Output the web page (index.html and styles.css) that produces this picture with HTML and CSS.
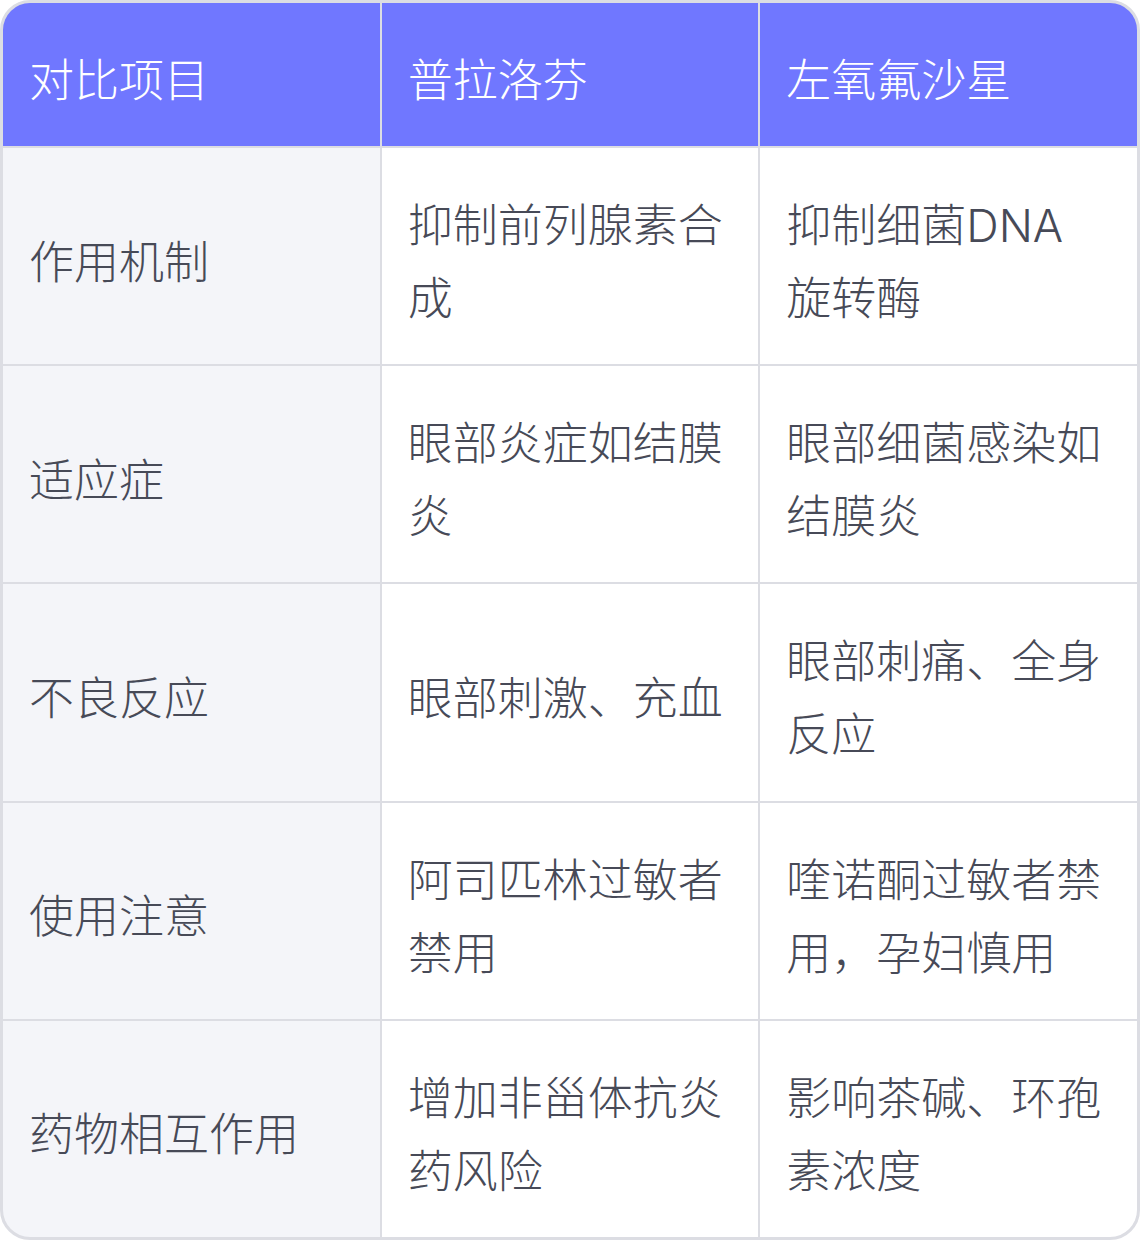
FILE: index.html
```html
<!DOCTYPE html>
<html lang="zh-CN">
<head>
<meta charset="utf-8">
<link rel="stylesheet" href="styles.css">
</head>
<body>
<div class="table">
  <div class="cell head">对比项目</div>
  <div class="cell head">普拉洛芬</div>
  <div class="cell head">左氧氟沙星</div>

  <div class="cell first">作用机制</div>
  <div class="cell">抑制前列腺素合成</div>
  <div class="cell">抑制细菌DNA旋转酶</div>

  <div class="cell first">适应症</div>
  <div class="cell">眼部炎症如结膜炎</div>
  <div class="cell">眼部细菌感染如结膜炎</div>

  <div class="cell first">不良反应</div>
  <div class="cell">眼部刺激、充血</div>
  <div class="cell">眼部刺痛、全身反应</div>

  <div class="cell first">使用注意</div>
  <div class="cell">阿司匹林过敏者禁用</div>
  <div class="cell">喹诺酮过敏者禁用，孕妇慎用</div>

  <div class="cell first">药物相互作用</div>
  <div class="cell">增加非甾体抗炎药风险</div>
  <div class="cell">影响茶碱、环孢素浓度</div>
</div>
</body>
</html>
```
FILE: styles.css
```css
html, body {
  margin: 0;
  padding: 0;
  background: #ffffff;
}
body {
  font-family: "Inter", "Noto Sans CJK SC", "Noto Sans", sans-serif;
  font-weight: 300;
}
.table {
  box-sizing: border-box;
  width: 1140px;
  height: 1240px;
  border: 3px solid #dcdde3;
  border-radius: 30px;
  overflow: hidden;
  display: grid;
  grid-template-columns: 1fr 1fr 1fr;
  grid-template-rows: 143px repeat(5, 1fr);
  gap: 2px;
  background: #dcdde3;
}
.cell {
  background: #ffffff;
  color: #474a57;
  font-size: 45px;
  line-height: 73px;
  padding: 12px 34px 0 26px;
  display: flex;
  align-items: center;
  word-break: break-all;
}
.cell.first {
  background: #f4f5f9;
}
.cell.head {
  background: #7077ff;
  color: #ffffff;
}
```
